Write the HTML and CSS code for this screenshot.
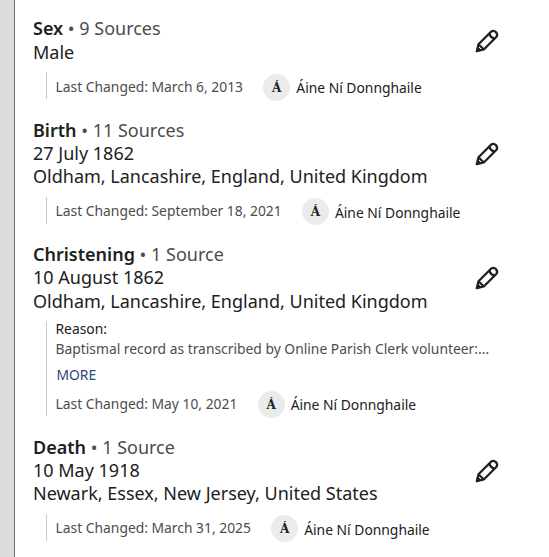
FILE: index.html
```html
<!DOCTYPE html>
<html lang="en">
<head>
    <meta charset="UTF-8">
    <title>Vital Information</title>
    <link rel="stylesheet" href="styles.css">
</head>
<body>
    <svg class="sprite" aria-hidden="true">
        <symbol id="pencil" viewBox="0 0 24 24">
            <path d="M1.8 22.2 L3.5 15.2 L16 2.7 A3.8 3.8 0 0 1 21.3 8 L8.8 20.5 Z"/>
            <path d="M3.5 15.2 L8.8 20.5 M14.4 4.3 Q15.2 8.8 19.7 9.6"/>
            <path class="tip" d="M1.8 22.2 L2.8 18 L6 21.2 Z"/>
        </symbol>
    </svg>

    <main class="panel">
        <section class="fact">
            <div class="fact-main">
                <div class="fact-text">
                    <div class="fact-title"><strong>Sex</strong> • 9 Sources</div>
                    <div>Male</div>
                </div>
                <button class="edit" aria-label="Edit sex"><svg><use href="#pencil"/></svg></button>
            </div>
            <div class="details">
                <div class="changed">
                    <span>Last Changed: March 6, 2013</span>
                    <span class="avatar">Á</span>
                    <span class="user">Áine Ní Donnghaile</span>
                </div>
            </div>
        </section>

        <section class="fact">
            <div class="fact-main">
                <div class="fact-text">
                    <div class="fact-title"><strong>Birth</strong> • 11 Sources</div>
                    <div>27 July 1862</div>
                    <div>Oldham, Lancashire, England, United Kingdom</div>
                </div>
                <button class="edit" aria-label="Edit birth"><svg><use href="#pencil"/></svg></button>
            </div>
            <div class="details">
                <div class="changed">
                    <span>Last Changed: September 18, 2021</span>
                    <span class="avatar">Á</span>
                    <span class="user">Áine Ní Donnghaile</span>
                </div>
            </div>
        </section>

        <section class="fact">
            <div class="fact-main">
                <div class="fact-text">
                    <div class="fact-title"><strong>Christening</strong> • 1 Source</div>
                    <div>10 August 1862</div>
                    <div>Oldham, Lancashire, England, United Kingdom</div>
                </div>
                <button class="edit" aria-label="Edit christening"><svg><use href="#pencil"/></svg></button>
            </div>
            <div class="details">
                <div class="reason-label">Reason:</div>
                <div class="reason">Baptismal record as transcribed by Online Parish Clerk volunteer:...</div>
                <button class="more">MORE</button>
                <div class="changed">
                    <span>Last Changed: May 10, 2021</span>
                    <span class="avatar">Á</span>
                    <span class="user">Áine Ní Donnghaile</span>
                </div>
            </div>
        </section>

        <section class="fact">
            <div class="fact-main">
                <div class="fact-text">
                    <div class="fact-title"><strong>Death</strong> • 1 Source</div>
                    <div>10 May 1918</div>
                    <div>Newark, Essex, New Jersey, United States</div>
                </div>
                <button class="edit" aria-label="Edit death"><svg><use href="#pencil"/></svg></button>
            </div>
            <div class="details">
                <div class="changed">
                    <span>Last Changed: March 31, 2025</span>
                    <span class="avatar">Á</span>
                    <span class="user">Áine Ní Donnghaile</span>
                </div>
            </div>
        </section>
    </main>
</body>
</html>
```
FILE: styles.css
```css
* {
    box-sizing: border-box;
}
body {
    margin: 0;
    padding-left: 14px;
    height: 100vh;
    overflow: hidden;
    background: #dcdedd;
    font-family: "Noto Sans", sans-serif;
    color: #202121;
}
button {
    border: none;
    background: none;
    padding: 0;
    font: inherit;
    cursor: pointer;
}
.sprite {
    display: none;
}
.panel {
    height: 100%;
    padding: 17.4px 50px 0 18px;
    border-left: 1px solid #6b6e6f;
    background: #fff;
}
.fact {
    margin-bottom: 19.3px;
}
.fact-main {
    display: flex;
    justify-content: space-between;
    align-items: center;
    font-size: 18px;
    line-height: 23.4px;
}
.fact-title {
    color: #4b4d4d;
}
.fact-title strong {
    font-weight: 600;
    color: #202121;
}
.edit {
    width: 24px;
    height: 24px;
    color: #202121;
}
.edit svg {
    display: block;
    width: 24px;
    height: 24px;
    fill: none;
    stroke: currentColor;
    stroke-width: 2.3;
    stroke-linejoin: round;
}
.tip {
    fill: currentColor;
    stroke-width: 1;
}
.details {
    margin: 8px 0 0 13px;
    padding-left: 8.5px;
    border-left: 1px solid #cacccc;
    font-size: 13.85px;
    line-height: 21px;
    color: #4b4d4d;
}
.changed {
    display: flex;
    align-items: center;
    height: 27px;
    white-space: nowrap;
}
.changed span:first-child {
    padding-top: 1.4px;
}
.avatar {
    width: 27px;
    height: 27px;
    margin: 3px 6px 0 20.3px;
    border-radius: 50%;
    background: #eaecec;
    font-family: "DejaVu Serif Condensed", "DejaVu Serif", serif;
    font-size: 13.4px;
    font-weight: bold;
    line-height: 27px;
    text-align: center;
    color: #202121;
}
.user {
    padding-top: 4.4px;
    color: #202121;
}
.reason-label {
    line-height: 16px;
    color: #202121;
}
.reason {
    line-height: 23px;
}
.more {
    display: block;
    height: 29px;
    padding: 0 0 1px 1px;
    color: #2f4480;
}
```
